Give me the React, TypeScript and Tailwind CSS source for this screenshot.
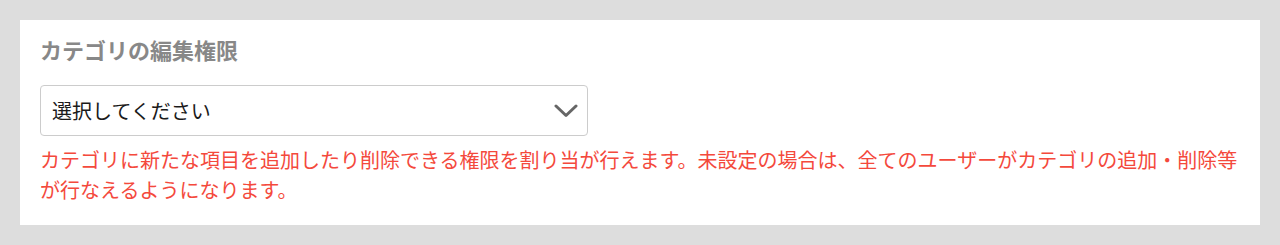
import React from 'react';

const FONT = { fontFamily: '"Noto Sans CJK JP", "Noto Sans", sans-serif' };

function ChevronDown() {
  return (
    <svg width="24" height="14" viewBox="0 0 24 14" fill="none" className="shrink-0">
      <path d="M2 2 L12 11.5 L22 2" stroke="#666" strokeWidth="3" strokeLinecap="round" strokeLinejoin="round" />
    </svg>
  );
}

export default function App() {
  return (
    <div className="min-h-[245px] bg-[#dddddd] px-5 pt-5 pb-5" style={FONT}>
      <div className="bg-white px-5 pt-[13px] pb-5">
        <h2 className="text-[22px] leading-[33px] font-bold text-[#888888]">カテゴリの編集権限</h2>
        <button
          type="button"
          className="mt-[19px] flex h-[51px] w-[548px] items-center justify-between rounded-[4px] border border-[#cccccc] bg-white pl-[11px] pr-[9px] text-left"
        >
          <span className="text-[20px] leading-[30px] text-[#1a1a1a]">選択してください</span>
          <ChevronDown />
        </button>
        <p className="mt-[9px] text-[20px] leading-[30px] text-[#f4493c]">
          カテゴリに新たな項目を追加したり削除できる権限を割り当が行えます。未設定の場合は、全てのユーザーがカテゴリの追加・削除等が行なえるようになります。
        </p>
      </div>
    </div>
  );
}
